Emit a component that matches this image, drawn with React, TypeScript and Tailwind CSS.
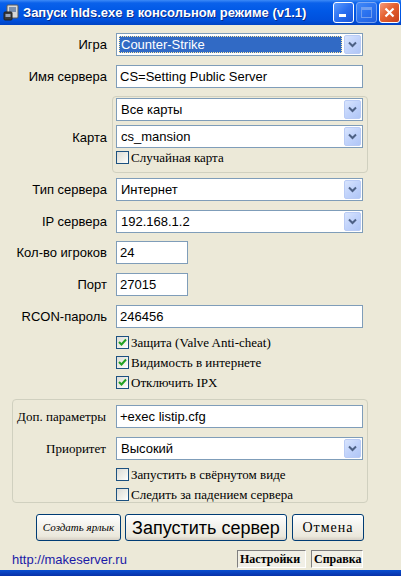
import React from "react";

const sans = "font-['Liberation_Sans',Arial,sans-serif]";
const serif = "font-['Liberation_Serif','Times_New_Roman',serif]";

function Arrow() {
  return (
    <div className="my-[1px] mr-[1px] w-[17px] self-stretch rounded-[2px] border border-[#b9cbf5] bg-[linear-gradient(135deg,#d8e4fd_0%,#c1d3fb_50%,#b0c6f6_100%)] flex items-center justify-center">
      <svg width="9" height="7" viewBox="0 0 9 7">
        <path d="M1 1.5 L4.5 5 L8 1.5" fill="none" stroke="#4d6185" strokeWidth="2" />
      </svg>
    </div>
  );
}

function Combo({ text, focused }: { text: string; focused?: boolean }) {
  return (
    <div className="h-[23px] w-[247px] border border-[#7f9db9] bg-white flex items-stretch">
      <div className="flex-1 flex items-stretch p-[2px]">
        {focused ? (
          <div className="flex-1 bg-[#316ac5] border border-dotted border-[#ffe9a0] text-white flex items-center pl-[1px]">
            <span className={`${sans} text-[13px] leading-none`}>{text}</span>
          </div>
        ) : (
          <div className="flex-1 flex items-center pl-[2px]">
            <span className={`${sans} text-[13px] leading-none text-black`}>{text}</span>
          </div>
        )}
      </div>
      <Arrow />
    </div>
  );
}

function Input({ text, w = "w-[247px]" }: { text: string; w?: string }) {
  return (
    <div className={`h-[23px] ${w} border border-[#7f9db9] bg-white flex items-center pl-[3px]`}>
      <span className={`${sans} text-[13px] leading-none text-black`}>{text}</span>
    </div>
  );
}

function Check({ checked, label }: { checked?: boolean; label: string }) {
  return (
    <div className="flex items-center h-[20px]">
      <div className="w-[13px] h-[13px] border border-[#1c5180] bg-[linear-gradient(135deg,#dcdcd7_0%,#f0f0ea_60%,#ffffff_100%)] flex items-center justify-center">
        {checked && (
          <svg width="9" height="9" viewBox="0 0 9 9">
            <path d="M1 4 L3.5 6.5 L8 1.5" fill="none" stroke="#21a121" strokeWidth="2" />
          </svg>
        )}
      </div>
      <span className={`${serif} text-[13px] leading-none text-black ml-[2px]`}>{label}</span>
    </div>
  );
}

function Label({ children, className = "" }: { children: React.ReactNode; className?: string }) {
  return (
    <div className={`w-[107px] shrink-0 text-right ${sans} text-[13px] leading-none text-black ${className}`}>
      {children}
    </div>
  );
}

function Row({ label, children, className = "" }: { label: string; children: React.ReactNode; className?: string }) {
  return (
    <div className={`flex items-center ${className}`}>
      <Label>{label}</Label>
      <div className="ml-[9px]">{children}</div>
    </div>
  );
}

function XpBtn({ children, className = "" }: { children: React.ReactNode; className?: string }) {
  return (
    <div
      className={`h-[27px] rounded-[3px] border border-[#003c74] bg-[linear-gradient(to_bottom,#ffffff_0%,#f4f3ee_40%,#ebe8dc_85%,#d6d0c5_100%)] flex items-center justify-center ${className}`}
    >
      {children}
    </div>
  );
}

export default function App() {
  return (
    <div className="w-[401px] h-[576px] bg-[#ece9d8] flex flex-col overflow-hidden">
      {/* Title bar */}
      <div className="h-[25px] shrink-0 bg-[linear-gradient(to_bottom,#3d8af7_0%,#0a61ea_12%,#0058e6_45%,#0050dd_80%,#0043c4_100%)] flex items-center">
        <div className="ml-[3px] w-[17px] h-[17px]">
          <svg width="17" height="17" viewBox="0 0 17 17">
            <rect x="4" y="1" width="11" height="13" rx="1" fill="#d8d8d8" stroke="#5a5a5a" />
            <rect x="6" y="3" width="7" height="5" fill="#7a8fae" />
            <rect x="1" y="8" width="8" height="8" rx="1" fill="#3b3b3b" stroke="#222" />
            <rect x="2.5" y="10" width="5" height="3" fill="#9aa4b8" />
          </svg>
        </div>
        <span className={`${sans} ml-[3px] text-[13px] font-bold text-white leading-none [text-shadow:1px_1px_0_#0a2a8a]`}>
          Запуск hlds.exe в консольном режиме (v1.1)
        </span>
        <div className="ml-auto mr-[1px] flex gap-[2px]">
          <div className="w-[21px] h-[21px] rounded-[3px] border border-white bg-[linear-gradient(135deg,#5b9bff_0%,#2a6ff0_50%,#1a56d8_100%)] flex items-end pl-[5px] pb-[5px]">
            <div className="w-[7px] h-[3px] bg-white" />
          </div>
          <div className="w-[21px] h-[21px] rounded-[3px] border border-[#a8c4f8] bg-[linear-gradient(135deg,#5b9bff_0%,#3d7ef5_50%,#2f68e4_100%)] flex items-center justify-center opacity-70">
            <div className="w-[11px] h-[11px] border border-[#9dbcf6] border-t-[3px]" />
          </div>
          <div className="w-[21px] h-[21px] rounded-[3px] border border-white bg-[linear-gradient(135deg,#f39b7d_0%,#e5612f_45%,#c8401a_100%)] flex items-center justify-center">
            <svg width="11" height="11" viewBox="0 0 11 11">
              <path d="M1.5 1.5 L9.5 9.5 M9.5 1.5 L1.5 9.5" stroke="white" strokeWidth="2.2" />
            </svg>
          </div>
        </div>
      </div>

      {/* Content */}
      <div className="flex-1 flex flex-col">
        <Row label="Игра" className="mt-[8px]">
          <Combo text="Counter-Strike" focused />
        </Row>
        <Row label="Имя сервера" className="mt-[9px]">
          <Input text="CS=Setting Public Server" />
        </Row>

        {/* Карта group */}
        <div className="flex items-center mt-[8px]">
          <Label className="pt-[6px]">Карта</Label>
          <div className="ml-[5px] w-[256px] h-[77px] rounded-[4px] border border-[#d0d0bf] pl-[3px] pt-[1px] flex flex-col">
            <Combo text="Все карты" />
            <div className="mt-[4px]">
              <Combo text="cs_mansion" />
            </div>
            <div className="-mt-[1px]">
              <Check label="Случайная карта" />
            </div>
          </div>
        </div>

        <Row label="Тип сервера" className="mt-[5px]">
          <Combo text="Интернет" />
        </Row>
        <Row label="IP сервера" className="mt-[9px]">
          <Combo text="192.168.1.2" />
        </Row>
        <Row label="Кол-во игроков" className="mt-[8px]">
          <Input text="24" w="w-[72px]" />
        </Row>
        <Row label="Порт" className="mt-[9px]">
          <Input text="27015" w="w-[72px]" />
        </Row>
        <Row label="RCON-пароль" className="mt-[9px]">
          <Input text="246456" />
        </Row>

        <div className="ml-[116px] mt-[4px] flex flex-col">
          <Check checked label="Защита (Valve Anti-cheat)" />
          <Check checked label="Видимость в интернете" />
          <Check checked label="Отключить IPX" />
        </div>

        {/* Group 2 */}
        <div className="ml-[12px] mt-[7px] w-[356px] h-[104px] rounded-[4px] border border-[#d0d0bf] pt-[5px] flex flex-col">
          <div className="flex items-center">
            <div className={`w-[93px] text-right ${serif} text-[13px] leading-none text-black`}>Доп. параметры</div>
            <div className="ml-[10px]">
              <Input text="+exec listip.cfg" />
            </div>
          </div>
          <div className="flex items-center mt-[9px]">
            <div className={`w-[93px] text-right ${serif} text-[13px] leading-none text-black`}>Приоритет</div>
            <div className="ml-[10px]">
              <Combo text="Высокий" />
            </div>
          </div>
          <div className="ml-[103px] mt-[4px] flex flex-col">
            <Check label="Запустить в свёрнутом виде" />
            <Check label="Следить за падением сервера" />
          </div>
        </div>

        {/* Buttons */}
        <div className="mt-[11px] ml-[36px] flex">
          <XpBtn className="w-[85px]">
            <span className={`${serif} italic text-[11px] text-black leading-none`}>Создать ярлык</span>
          </XpBtn>
          <XpBtn className="w-[162px] ml-[4px]">
            <span className={`${sans} text-[18px] text-black leading-none`}>Запустить сервер</span>
          </XpBtn>
          <XpBtn className="w-[72px] ml-[5px]">
            <span className={`${serif} text-[14px] tracking-[1px] text-black leading-none`}>Отмена</span>
          </XpBtn>
        </div>

        {/* Footer */}
        <div className="mt-[9px] flex items-center h-[18px]">
          <span className={`ml-[12px] ${sans} text-[13px] leading-none text-[#1a1aa6]`}>http://makeserver.ru</span>
          <div className="ml-auto mr-[38px] flex gap-[5px]">
            <div className="h-[18px] w-[69px] border border-t-[#808080] border-l-[#808080] border-b-white border-r-white bg-[#f1efe6] flex items-center pl-[2px]">
              <span className={`${serif} font-bold text-[12px] leading-none text-black`}>Настройки</span>
            </div>
            <div className="h-[18px] w-[52px] border border-t-[#808080] border-l-[#808080] border-b-white border-r-white bg-[#f1efe6] flex items-center pl-[2px]">
              <span className={`${serif} font-bold text-[12px] leading-none text-black`}>Справка</span>
            </div>
          </div>
        </div>
      </div>

      <div className="h-[6px] shrink-0 bg-[linear-gradient(to_bottom,#0a4fd0_0%,#0831a8_100%)]" />
    </div>
  );
}
